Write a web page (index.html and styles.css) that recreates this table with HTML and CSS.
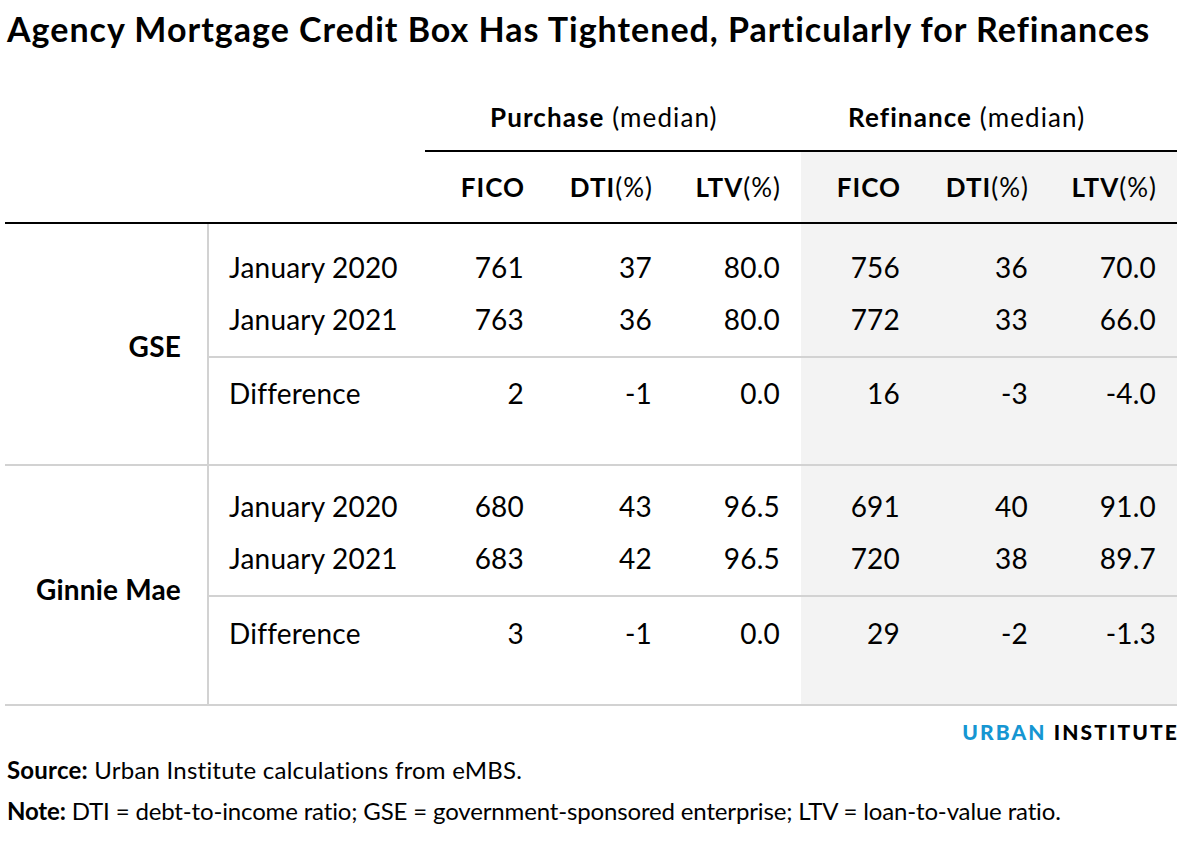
FILE: index.html
```html
<!DOCTYPE html>
<html lang="en">
<head>
<meta charset="utf-8">
<title>Agency Mortgage Credit Box</title>
<link rel="stylesheet" href="styles.css">
</head>
<body>
<div class="page">
  <h1 class="title">Agency Mortgage Credit Box Has Tightened, Particularly for Refinances</h1>

  <div class="table">
    <div class="ghead">
      <div class="spacer"></div>
      <div class="gcell g-purchase"><b>Purchase</b> (median)</div>
      <div class="gcell g-refi"><b>Refinance</b> (median)</div>
    </div>

    <div class="chead">
      <div class="spacer"></div>
      <div class="cols">
        <div class="c c1">FICO</div>
        <div class="c c2">DTI<span class="pct">(%)</span></div>
        <div class="c c3">LTV<span class="pct">(%)</span></div>
        <div class="c c4">FICO</div>
        <div class="c c5">DTI<span class="pct">(%)</span></div>
        <div class="c c6">LTV<span class="pct">(%)</span></div>
      </div>
    </div>

    <div class="block block-gse">
      <div class="label">GSE</div>
      <div class="rows">
        <div class="row first">
          <div class="sub">January 2020</div>
          <div class="n">761</div><div class="n">37</div><div class="n">80.0</div>
          <div class="n">756</div><div class="n">36</div><div class="n">70.0</div>
        </div>
        <div class="row second">
          <div class="sub">January 2021</div>
          <div class="n">763</div><div class="n">36</div><div class="n">80.0</div>
          <div class="n">772</div><div class="n">33</div><div class="n">66.0</div>
        </div>
        <div class="row diff">
          <div class="sub">Difference</div>
          <div class="n">2</div><div class="n">-1</div><div class="n">0.0</div>
          <div class="n">16</div><div class="n">-3</div><div class="n">-4.0</div>
        </div>
      </div>
    </div>

    <div class="block block-gm">
      <div class="label">Ginnie Mae</div>
      <div class="rows">
        <div class="row first">
          <div class="sub">January 2020</div>
          <div class="n">680</div><div class="n">43</div><div class="n">96.5</div>
          <div class="n">691</div><div class="n">40</div><div class="n">91.0</div>
        </div>
        <div class="row second">
          <div class="sub">January 2021</div>
          <div class="n">683</div><div class="n">42</div><div class="n">96.5</div>
          <div class="n">720</div><div class="n">38</div><div class="n">89.7</div>
        </div>
        <div class="row diff">
          <div class="sub">Difference</div>
          <div class="n">3</div><div class="n">-1</div><div class="n">0.0</div>
          <div class="n">29</div><div class="n">-2</div><div class="n">-1.3</div>
        </div>
      </div>
    </div>
  </div>

  <div class="logo"><span class="urban">URBAN</span> <span class="inst">INSTITUTE</span></div>

  <p class="note note-source"><b>Source:</b> Urban Institute calculations from eMBS.</p>
  <p class="note note-note"><b>Note:</b> DTI = debt-to-income ratio; GSE = government-sponsored enterprise; LTV = loan-to-value ratio.</p>
</div>
</body>
</html>
```

FILE: styles.css
```css
* { box-sizing: border-box; }
html, body { margin: 0; padding: 0; background: #fff; }
body {
  font-family: Lato, "Open Sans", "Liberation Sans", sans-serif;
  color: #000;
}
.page {
  width: 1177px;
  padding-left: 5px;
}
.title {
  margin: 0;
  padding: 9px 0 0 2px;
  font-size: 34px;
  line-height: 40px;
  font-weight: 700;
  letter-spacing: 1px;
  white-space: nowrap;
}

.table { margin-top: 37px; }

/* group header */
.ghead {
  display: grid;
  grid-template-columns: 420px 376px 376px;
  height: 64px;
  align-items: center;
  font-size: 26px;
  letter-spacing: 1.1px;
}
.gcell { white-space: nowrap; padding-bottom: 2px; }
.gcell b { font-weight: 700; }
.g-purchase { padding-left: 65px; }
.g-refi { padding-left: 47px; }

/* column header */
.chead {
  display: grid;
  grid-template-columns: 420px 752px;
}
.cols {
  display: grid;
  grid-template-columns: 120px 128px 128px 120px 128px 128px;
  border-top: 2px solid #000;
  height: 72px;
  align-items: center;
  background: linear-gradient(to right, transparent 376px, #f3f3f3 376px);
  font-size: 26px;
  font-weight: 700;
  letter-spacing: 1px;
}
.c { text-align: right; padding-right: 20px; padding-bottom: 1px; }
.pct { font-weight: 400; }

/* body blocks */
.block {
  display: grid;
  grid-template-columns: 202px 970px;
  font-size: 28px;
  letter-spacing: 0.2px;
}
.block-gse { border-top: 2px solid #000; }
.block-gm { border-top: 2px solid #d2d2d2; border-bottom: 2px solid #d2d2d2; }
.label {
  font-weight: 700;
  text-align: right;
  padding-right: 26px;
  display: flex;
  align-items: center;
  justify-content: flex-end;
  padding-top: 4px;
  white-space: nowrap;
}
.block-gm .label { padding-top: 8px; }
.rows {
  border-left: 2px solid #d2d2d2;
  background: linear-gradient(to right, transparent 592px, #f3f3f3 592px);
  background-clip: padding-box;
}
.row {
  display: grid;
  grid-template-columns: 216px 120px 128px 128px 120px 128px 128px;
  align-items: center;
  height: 52px;
  line-height: 52px;
}
.block-gse .row.first { margin-top: 17px; }
.block-gm .row.first { margin-top: 14px; }
.row.second { margin-bottom: 11px; }
.row.diff {
  border-top: 2px solid #d2d2d2;
  height: auto;
  padding-top: 12px;
  padding-bottom: 48px;
  line-height: 46px;
}
.block-gm .row.diff { padding-top: 13px; padding-bottom: 48px; }
.sub { padding-left: 20px; white-space: nowrap; }
.n { text-align: right; padding-right: 21px; }

/* logo */
.logo {
  text-align: right;
  margin-top: 13px;
  font-size: 21px;
  font-weight: 900;
  letter-spacing: 2.1px;
  line-height: 26px;
  margin-right: -2px;
}
.urban { color: #1696d2; }
.inst { color: #000; }

.note {
  margin: 0;
  padding-left: 2px;
  font-size: 24px;
  line-height: 41px;
  white-space: nowrap;
}
.note-source { letter-spacing: 0.22px; }
.note-note { letter-spacing: -0.15px; }
.logo + .note { margin-top: 4px; }
.note b { font-weight: 700; }
```
